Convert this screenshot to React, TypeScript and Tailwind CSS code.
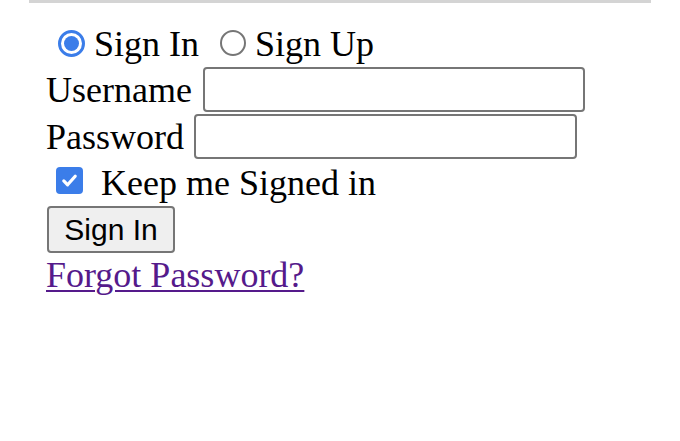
export default function App() {
  return (
    <div className="w-[680px] h-[441px] bg-white text-black font-['Liberation_Serif','Times_New_Roman',serif] text-[36px]">
      {/* top rule */}
      <div className="ml-[29px] w-[622px] h-[3px] bg-[#d4d4d4]" />

      <form className="pl-[46px] pt-[19px] flex flex-col">
        {/* radios */}
        <div className="h-[44px] flex items-center">
          <span className="ml-[12px] mb-[2px] w-[27px] h-[27px] rounded-full border-[3px] border-[#3b7de9] bg-white flex items-center justify-center">
            <span className="w-[15px] h-[15px] rounded-full bg-[#3b7de9]" />
          </span>
          <span className="ml-[9px]">Sign In</span>
          <span className="ml-[21px] mb-[2px] w-[26px] h-[26px] rounded-full border-2 border-[#767676] bg-white" />
          <span className="ml-[9px]">Sign Up</span>
        </div>

        {/* username */}
        <div className="h-[47px] flex items-center">
          <span>Username</span>
          <input
            type="text"
            className="ml-[11px] w-[382px] h-[45px] border-2 border-[#767676] rounded-[4px] bg-white outline-none"
          />
        </div>

        {/* password */}
        <div className="h-[47px] flex items-center">
          <span>Password</span>
          <input
            type="password"
            className="ml-[10px] w-[383px] h-[45px] border-2 border-[#767676] rounded-[4px] bg-white outline-none"
          />
        </div>

        {/* keep signed in */}
        <div className="h-[46px] flex items-center">
          <span className="ml-[10px] mb-[5px] w-[27px] h-[27px] rounded-[4px] bg-[#3b7de9] flex items-center justify-center">
            <svg width="19" height="19" viewBox="0 0 20 20" fill="none">
              <path d="M4 10.5l4 4 8-9" stroke="white" strokeWidth="3.4" strokeLinecap="round" strokeLinejoin="round" />
            </svg>
          </span>
          <span className="ml-[18px]">Keep me Signed in</span>
        </div>

        {/* button */}
        <div className="h-[47px] flex items-center">
          <button
            type="button"
            className="ml-[1px] w-[128px] h-[47px] bg-[#efefef] border-2 border-[#767676] rounded-[4px] font-['Liberation_Sans',Arial,sans-serif] text-[30px] leading-none text-black"
          >
            Sign In
          </button>
        </div>

        {/* link */}
        <div className="h-[44px] flex items-center">
          <a href="#" className="text-[#551a8b] underline decoration-2 underline-offset-[3px]">
            Forgot Password?
          </a>
        </div>
      </form>
    </div>
  )
}
